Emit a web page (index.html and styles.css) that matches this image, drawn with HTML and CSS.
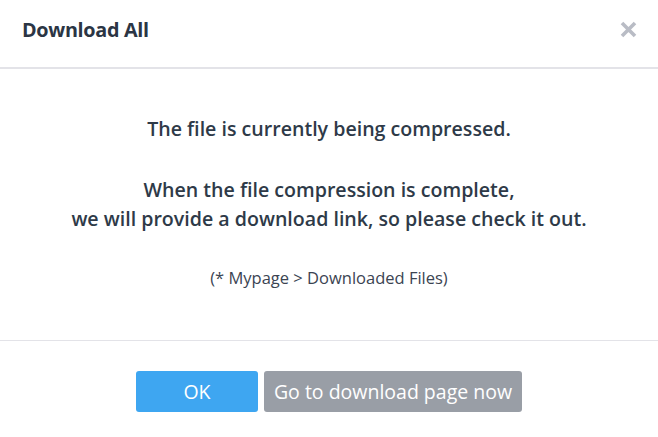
FILE: index.html
```html
<!DOCTYPE html>
<html>
<head>
<meta charset="utf-8">
<link rel="stylesheet" href="styles.css">
</head>
<body>
<div class="modal">
  <div class="header">
    <div class="title">Download All</div>
    <div class="close">
      <svg width="17" height="17" viewBox="0 0 17 17"><path d="M2 2 L15 15 M15 2 L2 15" stroke="#b9bcc5" stroke-width="3.6" stroke-linecap="butt"/></svg>
    </div>
  </div>
  <div class="body">
    <p class="msg">The file is currently being compressed.</p>
    <p class="msg">When the file compression is complete,<br>we will provide a download link, so please check it out.</p>
    <p class="note">(* Mypage &gt; Downloaded Files)</p>
  </div>
  <div class="footer">
    <button class="btn btn-ok">OK</button>
    <button class="btn btn-go">Go to download page now</button>
  </div>
</div>
</body>
</html>
```
FILE: styles.css
```css
html, body { margin: 0; padding: 0; background: #fff; }
body { width: 658px; height: 437px; overflow: hidden; font-family: "Open Sans", sans-serif; color: #2e3a48; }
.modal { display: flex; flex-direction: column; }
.header { border-bottom: 2px solid #e3e3e8; display: flex; align-items: center; justify-content: space-between; padding: 0 21px 8px 22px; box-sizing: border-box; height: 69px; }
.title { font-size: 19.8px; font-weight: 700; color: #2b3544; letter-spacing: -0.3px; }
.close { width: 17px; height: 17px; display: flex; }
.body { text-align: center; padding: 45px 10px 0; height: 272px; box-sizing: border-box; border-bottom: 1px solid #e3e3e8; }
.msg { margin: 0 0 32px; font-size: 19.6px; font-weight: 600; line-height: 29px; color: #2e3a48; white-space: nowrap; }
.msg + .msg { margin-bottom: 35px; }
.note { margin: 0; font-size: 16.5px; color: #3b4452; line-height: 20px; }
.footer { display: flex; justify-content: center; gap: 6px; padding-top: 30px; }
.btn { border: none; border-radius: 3px; height: 41px; font-family: "Open Sans", sans-serif; font-size: 19.5px; color: #fff; padding: 0; cursor: pointer; }
.btn-ok { width: 122px; background: #3ea6f1; }
.btn-go { width: 258px; background: #999ea6; }
```
